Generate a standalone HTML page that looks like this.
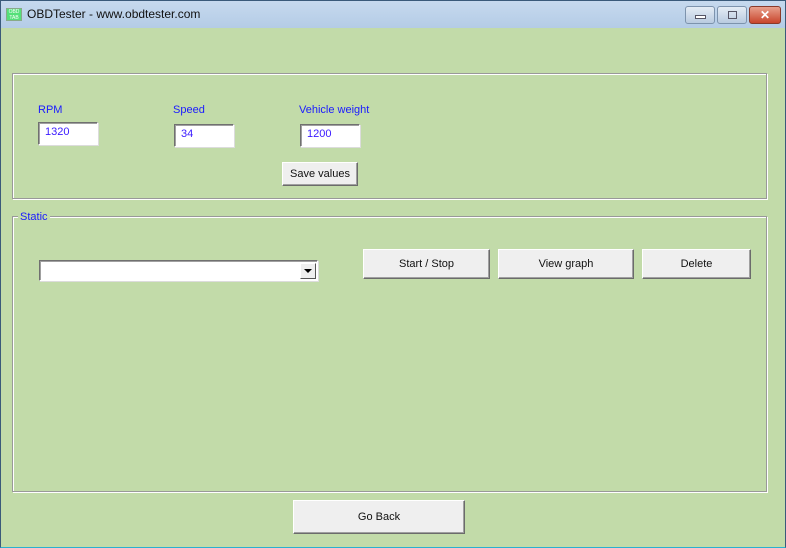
<!DOCTYPE html>
<html><head><style>
*{margin:0;padding:0;box-sizing:border-box}
body{width:786px;height:548px;overflow:hidden;font-family:"Liberation Sans",sans-serif;font-size:11px;position:relative;background:#c2dba9}
.win{position:absolute;left:0;top:0;width:786px;height:548px;border:1px solid #3a5a7a;border-bottom-color:#2ab0d0;background:#c2dba9}
.title{position:absolute;left:0;top:0;width:784px;height:27px;background:linear-gradient(#c6d9ee,#b4cce6)}
.title span{position:absolute;left:26px;top:6px;font-size:12px;color:#111}
.ico{position:absolute;left:5px;top:7px;width:16px;height:13px;background:#55e07a;border:1px solid #8a8;font-size:5px;color:#fff;line-height:6px;text-align:center}
.tb{position:absolute;top:5px;height:18px;border:1px solid #7d93ad;border-radius:3px;background:linear-gradient(#e4ecf5,#b9cbe0)}
.abs{position:absolute}
.grp{position:absolute;border:1px solid #999;box-shadow:inset 1px 1px 0 #fff,1px 1px 0 #fff}
.lbl{position:absolute;color:#1a1aff;font-size:11px}
.ed{position:absolute;background:#fff;border:1px solid;border-color:#707070 #fff #fff #707070;box-shadow:inset 1px 1px 0 #a0a0a0,1px 1px 0 #dcdcdc;color:#3a1aff;padding:3px 0 0 6px;font-size:11px}
.btn{position:absolute;background:#efefef;border:1px solid;border-color:#fff #6b6b6b #6b6b6b #fff;box-shadow:inset -1px -1px 0 #a0a0a0;display:flex;align-items:center;justify-content:center;color:#111;font-size:11px}
</style></head><body>
<div class="win">
<div class="title"><div class="ico">OBD<br>TAB</div><span>OBDTester - www.obdtester.com</span>
<div class="tb" style="left:684px;width:30px"><div class="abs" style="left:9px;top:8px;width:11px;height:4px;border:1px solid #556;background:#fff"></div></div>
<div class="tb" style="left:716px;width:30px"><div class="abs" style="left:10px;top:4px;width:9px;height:8px;border:1px solid #556"></div></div>
<div class="tb" style="left:748px;width:32px;background:linear-gradient(#e8a08c,#c8452c);border-color:#8a3a2a;color:#fff;font-weight:bold;text-align:center;font-size:12px;line-height:16px">✕</div>
</div>
<div class="grp" style="left:11px;top:72px;width:755px;height:126px"></div>
<div class="lbl" style="left:37px;top:103px">RPM</div>
<div class="lbl" style="left:172px;top:103px">Speed</div>
<div class="lbl" style="left:298px;top:103px">Vehicle weight</div>
<div class="ed" style="left:37px;top:121px;width:60px;height:23px">1320</div>
<div class="ed" style="left:173px;top:123px;width:60px;height:23px">34</div>
<div class="ed" style="left:299px;top:123px;width:60px;height:23px">1200</div>
<div class="btn" style="left:281px;top:161px;width:76px;height:24px">Save values</div>
<div class="grp" style="left:11px;top:215px;width:755px;height:276px"></div>
<div class="lbl" style="left:17px;top:210px;background:#c2dba9;padding:0 2px">Static</div>
<div class="ed" style="left:38px;top:259px;width:279px;height:21px"></div>
<div class="abs" style="left:299px;top:262px;width:16px;height:16px;background:#efefef;border:1px solid;border-color:#fff #555 #555 #fff"><div class="abs" style="left:3px;top:5px;border-left:4px solid transparent;border-right:4px solid transparent;border-top:4px solid #000"></div></div>
<div class="btn" style="left:362px;top:248px;width:127px;height:30px">Start / Stop</div>
<div class="btn" style="left:497px;top:248px;width:136px;height:30px">View graph</div>
<div class="btn" style="left:641px;top:248px;width:109px;height:30px">Delete</div>
<div class="btn" style="left:292px;top:499px;width:172px;height:34px">Go Back</div>
</div>
</body></html>
